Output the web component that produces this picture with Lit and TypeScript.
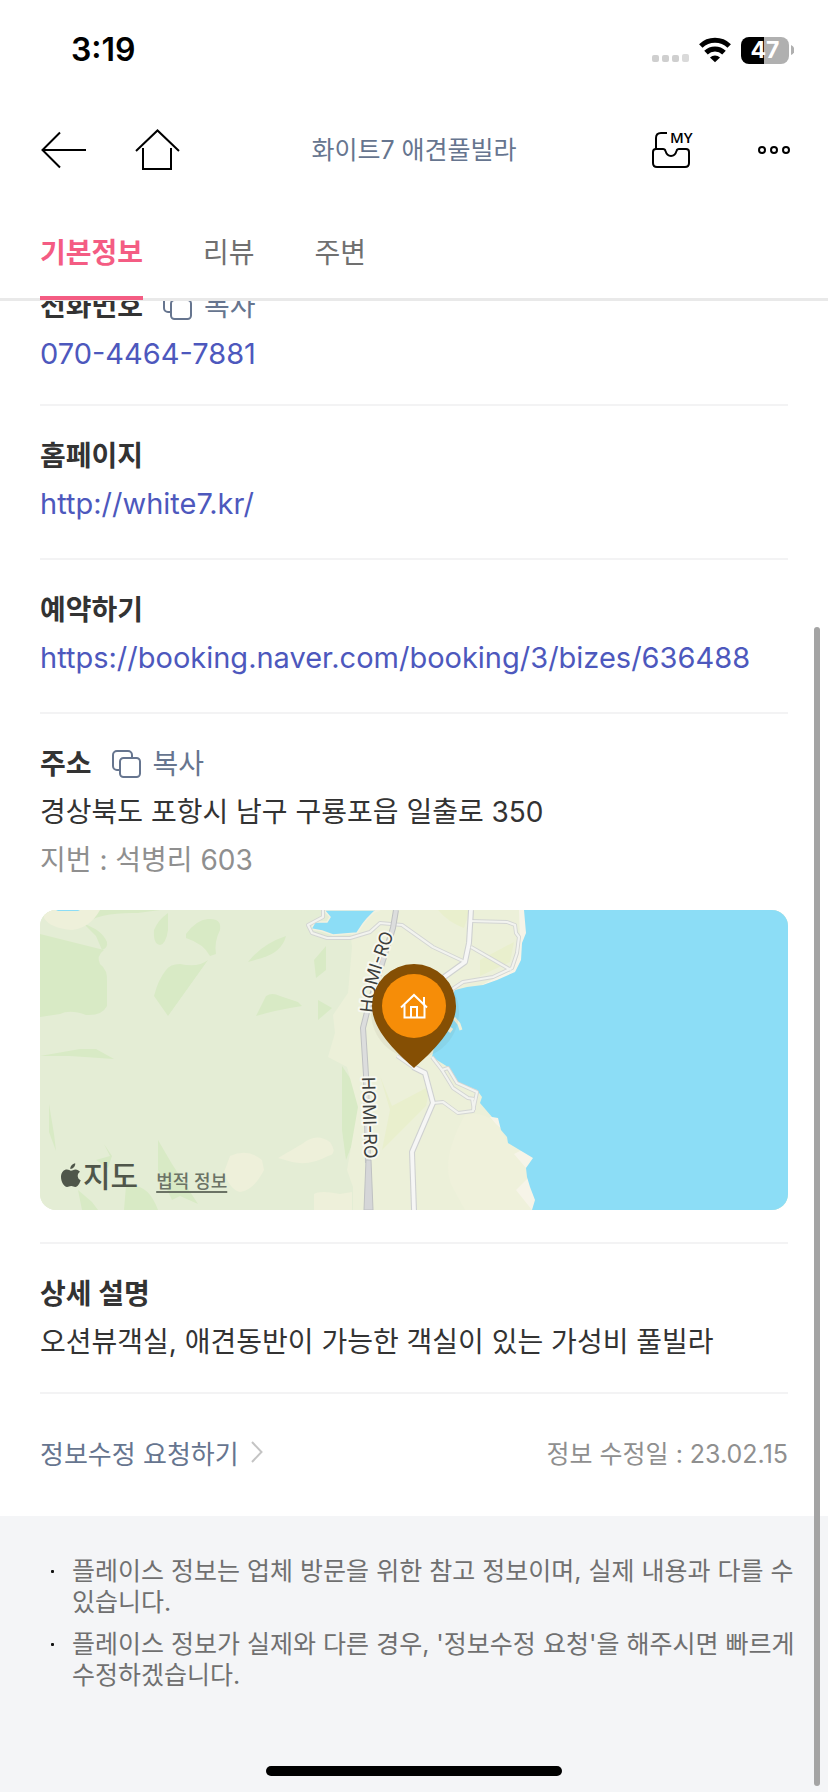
import { LitElement, html, svg, css } from "lit";
import { customElement, property, state } from "lit/decorators.js";
import { classMap } from "lit/directives/class-map.js";

@customElement("status-bar")
class StatusBar extends LitElement {
  static styles = css`
    :host {
      display: flex;
      align-items: center;
      justify-content: space-between;
      height: 100px;
      padding: 0 34px 0 71px;
      box-sizing: border-box;
      color: #000;
    }
    .time {
      font-size: 32px;
      font-weight: 600;
      line-height: 40px;
    }
    .signals {
      display: flex;
      align-items: center;
      gap: 10px;
    }
    .signals svg {
      display: block;
    }
    .battery {
      display: flex;
      align-items: center;
      gap: 2px;
    }
    .cell {
      width: 48px;
      height: 27px;
      border-radius: 8px;
      background: linear-gradient(90deg, #000 48%, #b0b0b0 48%);
      color: #fff;
      font-size: 23px;
      font-weight: 700;
      line-height: 27px;
      text-align: center;
    }
  `;

  render() {
    return html`
      <span class="time">3:19</span>
      <div class="signals">
        <svg width="37" height="26" viewBox="0 0 37 26" fill="#cfcfcf">
          <rect x="0" y="18" width="7" height="7" rx="2" />
          <rect x="10" y="18" width="7" height="7" rx="2" />
          <rect x="20" y="18" width="7" height="7" rx="2" />
          <rect x="30" y="17" width="7" height="8" rx="2" fill="#dadada" />
        </svg>
        <svg width="32" height="26" viewBox="0 0 32 26" fill="none" stroke="#000" stroke-width="5">
          <path d="M1.8 9a20.5 20.5 0 0 1 28.400 0" />
          <path d="M7 15.600a12.800 12.800 0 0 1 18 0" />
          <path d="M11 20.400a7.400 7.400 0 0 1 10 0l-5 4.800z" fill="#000" stroke="none" />
        </svg>
        <div class="battery">
          <div class="cell">47</div>
          <svg width="3" height="10" viewBox="0 0 3 10"><path d="M0 0a5.4 5.4 0 0 1 0 10z" fill="#b0b0b0" /></svg>
        </div>
      </div>
    `;
  }
}

@customElement("copy-button")
class CopyButton extends LitElement {
  static styles = css`
    :host {
      display: flex;
    }
    .copy {
      display: flex;
      align-items: center;
      gap: 12px;
      padding: 0;
      border: 0;
      background: none;
      color: #66758f;
      font: inherit;
      font-weight: 400;
      cursor: pointer;
    }
  `;

  render() {
    return html`
      <button class="copy" type="button">
        <svg width="29" height="28" viewBox="0 0 29 28" fill="none" stroke="currentColor" stroke-width="2">
          <path d="M8 20H5a4 4 0 0 1-4-4V5a4 4 0 0 1 4-4h11a4 4 0 0 1 4 4v3" />
          <rect x="8" y="8" width="20" height="19" rx="3.5" />
        </svg>
        <span>복사</span>
      </button>
    `;
  }
}

@customElement("info-section")
class InfoSection extends LitElement {
  @property() label = "";
  @property({ type: Boolean }) copyable = false;

  static styles = css`
    :host {
      display: block;
      padding: 26px 0;
      border-bottom: 2px solid #f3f3f4;
      line-height: 48px;
    }
    :host([loose]) {
      padding-bottom: 30px;
    }
    :host([tall]) {
      padding-bottom: 32px;
    }
    .head {
      display: flex;
      align-items: center;
      gap: 20px;
    }
    .label {
      margin: 0;
      font-size: 28px;
      font-weight: 700;
    }
  `;

  render() {
    return html`
      <div class="head">
        <h2 class="label">${this.label}</h2>
        ${this.copyable ? html`<copy-button></copy-button>` : null}
      </div>
      <slot></slot>
    `;
  }
}

const WOODS = [
  "M0 24L64 40Q56 46 60 54Q68 60 67 72V96Q62 106 46 105Q30 99 20 104L0 107z",
  "M44 14Q62 20 67 32Q68 38 62 40L56 26z",
  "M44 14Q60 2 98 3L120 0H58z",
  "M128 3V20Q126 34 120 35Q113 34 114 20Q118 10 128 3z",
  "M146 24Q156 10 168 9Q182 8 180 20Q174 32 176 44L170 46Q164 34 146 28z",
  "M168 50L128 106L114 86Q118 70 126 60Q130 54 140 54Q158 58 168 50z",
  "M208 52Q222 34 246 26Q242 42 222 48z",
  "M216 106L226 86Q232 82 240 86L258 92L262 96Q236 100 216 106z",
  "M0 146L40 139H56L74 149L30 146z",
  "M9 194L14 224L16 241L9 222z",
  "M212 200L220 168L216 184z",
  "M118 230L132 254L158 294L140 286L132 290L118 260z",
  "M86 276Q108 272 118 300H84z",
  "M38 280L52 292L58 300H42z",
  "M64 234L72 246L68 258L56 250L70 246z",
  "M274 50L286 36V60L276 68z",
  "M278 90L292 98L278 110z",
  "M302 156L318 180L320 214L306 250L302 220z",
];

const CLEARINGS = [
  "M4 0H60Q50 18 32 20Q10 18 4 8z",
  "M184 262L190 246Q208 238 222 250L224 260Q214 280 200 282Q190 280 184 262z",
  "M238 248L262 234Q276 222 290 232Q298 244 288 246Q270 256 252 252z",
  "M274 284Q280 280 300 284L312 282V300H274z",
];

const ROADS = [
  "M283 0V7L268 15L272 23L287 28H310L330 22L340 13L362 15L393 37L425 52",
  "M431 11L467 12L475 15L476 23L479 27L477 43L472 58L453 67L423 72L408 82",
  "M431 37L471 60",
  "M357 146L373 157",
  "M393 193L403 192L418 203L433 201L437 182L417 173L408 158L402 160L392 147",
  "M402 160L413 178L428 188L434 189",
  "M432 188L434 200",
];

const STREETS = ["M431 0L429 33L425 52L400 70", "M373 157L385 163L393 193L372 242L374 300"];

@customElement("place-map")
class PlaceMap extends LitElement {
  static styles = css`
    :host {
      display: block;
      position: relative;
      height: 300px;
      overflow: hidden;
      border-radius: 16px;
      background: #e4edd5;
    }
    .canvas {
      display: block;
      width: 100%;
      height: 100%;
    }
    .road-name {
      font-size: 18px;
      fill: #3d3f3d;
      stroke: #f7f8f0;
      stroke-width: 4px;
      stroke-linejoin: round;
      paint-order: stroke;
    }
    .credit {
      position: absolute;
      left: 21px;
      bottom: 10px;
      display: flex;
      align-items: baseline;
      color: #4f564a;
      line-height: 36px;
    }
    .brand {
      display: flex;
      align-items: center;
      gap: 2px;
      font-size: 30px;
      font-weight: 500;
    }
    .legal {
      margin-left: 18px;
      color: #6b7365;
      font-size: 18px;
      font-weight: 500;
      text-decoration-thickness: 2px;
      text-underline-offset: 3px;
    }
  `;

  render() {
    return html`
      <svg class="canvas" viewBox="0 0 748 300" preserveAspectRatio="xMidYMid slice" role="img" aria-label="지도">
        <rect width="748" height="300" fill="#e4edd5" />
        ${WOODS.map((d) => svg`<path d=${d} fill="#d8eac5" />`)}
        ${CLEARINGS.map((d) => svg`<path d=${d} fill="#eef0da" />`)}
        <path d="M16 0H40L38 1H18z" fill="#8cddf6" />
        <path
          d="M308 0L312 37L308 83L293 105L295 123L288 147L307 157L318 197L307 260L313 277V300H500V0z"
          fill="#ecf0d9"
        />
        <path d="M398 0H430L424 18Q408 12 398 0zM440 50L474 32L470 52L440 66zM340 166L352 196L390 176L386 196L370 212L342 240L350 200z" fill="#e9efcd" />
        <path d="M425 205Q450 200 462 222L468 233L493 248L487 267L496 300H425L412 276Q400 250 425 205z" fill="#eff1db" />
        <path d="M479 0H486L490 22L484 34L483 50L475 64L440 76L474 58L480 28zM450 207L460 206L469 226L456 214zM482 240L494 248L486 258L474 244zM476 280L490 266L496 290L492 300z" fill="#f6f4e8" />
        <path
          d="M484 0L486 23L482 33L481 50L475 62L457 70L443 75L427 77L415 80L400 110L392 147L408 157L417 172L437 180L442 187L440 193L452 207L458 208L461 220L467 227L468 233L493 248L486 258L487 267L490 277L495 290L492 300H748V0z"
          fill="#8cddf6"
        />
        <path d="M284 0L290 7L287 12L275 12L271 19L282 21L293 25L317 23L323 14L327 9L334 2L340 0z" fill="#8cddf6" stroke="#f2f1e0" stroke-width="1.5" />
        <path d="M414 108L419 114L421 120M412 118L409 122" fill="none" stroke="#eef0da" stroke-width="3" />
        <g fill="none" stroke-linejoin="round">
          ${ROADS.map((d) => svg`<path d=${d} stroke="#d3d5d3" stroke-width="4" />`)}
          ${STREETS.map((d) => svg`<path d=${d} stroke="#cfd1d1" stroke-width="6" />`)}
          ${ROADS.map((d) => svg`<path d=${d} stroke="#f2f3ef" stroke-width="2.2" />`)}
          ${STREETS.map((d) => svg`<path d=${d} stroke="#f6f6f5" stroke-width="3.8" />`)}
          <path d="M356 0L353 18L327 102L323 118L326 165L328 253" stroke="#bfc1c2" stroke-width="6" />
          <path d="M356 0L353 18L327 102L323 118L326 165L328 253" stroke="#dcdddd" stroke-width="4" />
          <path d="M326 250H331L333 300H324z" fill="#d5d6d8" stroke="#bfc1c2" />
        </g>
        <path id="north" d="M333 103Q335 74 346 46T356 6" fill="none" />
        <path id="south" d="M322 167L325 270" fill="none" />
        <text class="road-name"><textPath href="#north">HOMI-RO</textPath></text>
        <text class="road-name"><textPath href="#south">HOMI-RO</textPath></text>
        <ellipse cx="375" cy="102" rx="44" ry="46" fill="#5d4a20" opacity="0.06" />
        <path d="M374 158C362 147 332 122 332 96A42 42 0 0 1 416 96C416 122 386 147 374 158z" fill="#854f04" />
        <circle cx="374" cy="96" r="32" fill="#f68d08" />
        <g fill="none" stroke="#fff" stroke-width="2">
          <path d="M361 97.500L374 85L387 97.500M384 94V87" />
          <path d="M364.500 95V107.500H384.500V95M371 107V97H377V107" />
        </g>
      </svg>
      <div class="credit">
        <span class="brand">
          <svg width="20" height="25" viewBox="0 0 20 25" fill="currentColor">
            <path d="M14.200 0.200C14.600 3 12 6 9.300 5.900C9 3.200 11.600 0.500 14.200 0.200z" />
            <path d="M10 7.700C11.200 7.700 12.500 6.400 14.600 6.400C16.400 6.400 18 7.400 19 8.800C15.600 11 16.200 15.900 19.700 17.300C18.900 19.600 16.900 24 14.300 24C12.700 24 12.100 23 10.200 23C8.300 23 7.600 24 6.100 24C3 24 0 18.600 0 14C0 9.200 3 6.600 5.900 6.600C7.700 6.600 9 7.700 10 7.700z" />
          </svg>
          지도
        </span>
        <a class="legal" href="#legal">법적 정보</a>
      </div>
    `;
  }
}

@customElement("app-root")
class AppRoot extends LitElement {
  @state() private current = "기본정보";

  private tabs = ["기본정보", "리뷰", "주변"];

  private notes = [
    "플레이스 정보는 업체 방문을 위한 참고 정보이며, 실제 내용과 다를 수 있습니다.",
    "플레이스 정보가 실제와 다른 경우, '정보수정 요청'을 해주시면 빠르게 수정하겠습니다.",
  ];

  static styles = css`
    :host {
      display: flex;
      flex-direction: column;
      position: relative;
      min-height: 100vh;
      background: #fff;
      color: #333;
      font-family: Inter, "Noto Sans CJK KR", sans-serif;
      font-size: 28px;
    }
    .top {
      position: sticky;
      top: 0;
      z-index: 1;
      background: #fff;
      border-bottom: 3px solid #e9e9e9;
    }
    .bar {
      display: grid;
      grid-template-columns: 1fr auto 1fr;
      align-items: center;
      height: 100px;
      padding: 0 38px;
    }
    .title {
      margin: 0;
      color: #66758f;
      font-size: 25px;
      font-weight: 400;
      line-height: 36px;
    }
    .actions {
      display: flex;
      align-items: center;
      gap: 48px;
    }
    .actions.end {
      justify-content: flex-end;
      gap: 62px;
    }
    .icon {
      display: flex;
      padding: 0;
      border: 0;
      background: none;
      color: #000;
      cursor: pointer;
    }
    .my {
      font-family: "Open Sans", sans-serif;
      font-size: 15px;
      font-weight: 600;
    }
    .tabs {
      display: flex;
      gap: 60px;
      height: 98px;
      padding: 0 40px;
    }
    .tab {
      height: 100px;
      padding: 6px 0 0;
      border: 0;
      border-bottom: 4px solid transparent;
      background: none;
      color: #707070;
      font: inherit;
      cursor: pointer;
    }
    .tab.on {
      border-color: #f45c83;
      color: #f45c83;
      font-weight: 700;
    }
    .details {
      margin-top: -45px;
      padding: 0 40px;
    }
    .value {
      margin: 0;
    }
    .value.muted {
      color: #8f8f8f;
      margin-bottom: 26px;
    }
    .link {
      display: block;
      color: #4d58bd;
      font-size: 29px;
      text-decoration: none;
      overflow-wrap: anywhere;
    }
    .meta {
      display: flex;
      align-items: center;
      justify-content: space-between;
      height: 116px;
      padding-bottom: 6px;
    }
    .edit {
      display: flex;
      align-items: center;
      gap: 12px;
      color: #66758f;
      font-size: 26px;
      text-decoration: none;
    }
    .date {
      color: #8f8f8f;
      font-size: 25px;
    }
    .notes {
      flex: 1;
      display: flex;
      flex-direction: column;
      gap: 11px;
      margin: 0;
      padding: 40px 24px 90px 40px;
      background: #f4f5f7;
      color: #707070;
      font-size: 25px;
      line-height: 31px;
      list-style: none;
    }
    .note {
      display: grid;
      grid-template-columns: 24px 1fr;
      gap: 8px;
      word-break: keep-all;
    }
    .note::before {
      content: "";
      width: 3px;
      height: 3px;
      margin: 14px 0 0 11px;
      border-radius: 1px;
      background: #111;
    }
    .scroll-thumb {
      position: absolute;
      z-index: 2;
      top: 627px;
      right: 8px;
      bottom: 6px;
      width: 6px;
      border-radius: 3px;
      background: #a4a4a4;
    }
    .home-bar {
      position: absolute;
      left: 50%;
      bottom: 16px;
      width: 296px;
      height: 10px;
      margin-left: -148px;
      border-radius: 5px;
      background: #000;
    }
  `;

  render() {
    return html`
      <header class="top">
        <status-bar></status-bar>
        <div class="bar">
          <div class="actions">
            <button class="icon" type="button" aria-label="뒤로">
              <svg width="49" height="40" viewBox="-3 0 49 40" fill="none" stroke="currentColor" stroke-width="2">
                <path d="M45 20H2M19 2.500L1.500 20L19 37.500" />
              </svg>
            </button>
            <button class="icon" type="button" aria-label="홈">
              <svg width="45" height="42" viewBox="0 0 45 42" fill="none" stroke="currentColor" stroke-width="2">
                <path d="M1 22L22.500 1.500L44 22M8 19V40H36V19" />
              </svg>
            </button>
          </div>
          <h1 class="title">화이트7 애견풀빌라</h1>
          <div class="actions end">
            <button class="icon" type="button" aria-label="MY">
              <svg width="44" height="48" viewBox="0 -6 44 48" fill="none" stroke="currentColor" stroke-width="2">
                <path d="M4 17V6Q4 1 9 1H15" />
                <path d="M1 20Q1 17 4 17H11Q13 17 13.500 19Q15 24 19 24Q23 24 24.500 19Q25 17 27 17H34Q37 17 37 20V31Q37 35 33 35H5Q1 35 1 31z" />
                <text class="my" x="18" y="11" fill="currentColor" stroke="none">MY</text>
              </svg>
            </button>
            <button class="icon" type="button" aria-label="더보기">
              <svg width="32" height="10" viewBox="0 0 32 10" fill="none" stroke="currentColor" stroke-width="2">
                <circle cx="4" cy="5" r="3" />
                <circle cx="16" cy="5" r="3" />
                <circle cx="28" cy="5" r="3" />
              </svg>
            </button>
          </div>
        </div>
        <nav class="tabs">
          ${this.tabs.map(
            (tab) => html`
              <button
                type="button"
                class=${classMap({ tab: true, on: tab === this.current })}
                @click=${() => (this.current = tab)}
              >${tab}</button>
            `
          )}
        </nav>
      </header>

      <main class="details">
        <info-section label="전화번호" copyable>
          <a class="link" href="tel:070-4464-7881">070-4464-7881</a>
        </info-section>
        <info-section label="홈페이지" loose>
          <a class="link" href="http://white7.kr/">http://white7.kr/</a>
        </info-section>
        <info-section label="예약하기" loose>
          <a class="link" href="https://booking.naver.com/booking/3/bizes/636488">https://booking.naver.com/booking/3/bizes/636488</a>
        </info-section>
        <info-section label="주소" copyable tall>
          <p class="value">경상북도 포항시 남구 구룡포읍 일출로 350</p>
          <p class="value muted">지번 : 석병리 603</p>
          <place-map></place-map>
        </info-section>
        <info-section label="상세 설명">
          <p class="value">오션뷰객실, 애견동반이 가능한 객실이 있는 가성비 풀빌라</p>
        </info-section>
        <div class="meta">
          <a class="edit" href="#edit">
            정보수정 요청하기
            <svg width="12" height="22" viewBox="0 0 12 22" fill="none" stroke="#c4c4c4" stroke-width="2">
              <path d="M1 1L10.500 11L1 21" />
            </svg>
          </a>
          <span class="date">정보 수정일 : 23.02.15</span>
        </div>
      </main>

      <ul class="notes">
        ${this.notes.map((note) => html`<li class="note"><span>${note}</span></li>`)}
      </ul>
      <div class="scroll-thumb"></div>
      <div class="home-bar"></div>
    `;
  }
}
